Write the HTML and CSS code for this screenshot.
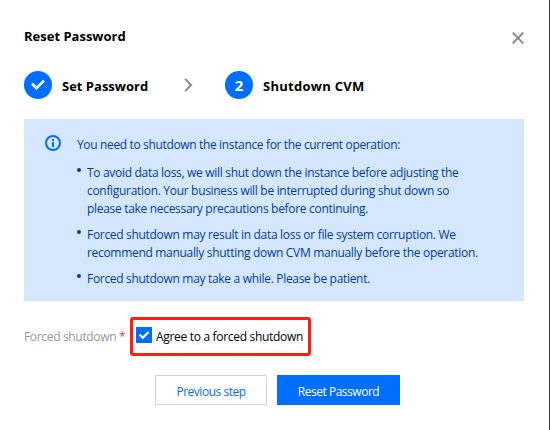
FILE: index.html
```html
<!DOCTYPE html>
<html lang="en">
<head>
    <meta charset="UTF-8">
    <meta name="viewport" content="width=device-width, initial-scale=1.0">
    <title>Reset Password</title>
    <link rel="stylesheet" href="styles.css">
</head>

<body>
<div class="dialog">
    <div class="dialog-header">
        <h1 class="dialog-title">Reset Password</h1>
        <button class="btn-close" type="button" aria-label="Close">
            <svg width="12" height="12" viewBox="0 0 12 12" fill="none" stroke="#888" stroke-width="1.9">
                <path d="M0.7 0.7L11.3 11.3M11.3 0.7L0.7 11.3"/>
            </svg>
        </button>
    </div>

    <div class="steps">
        <span class="step-num">
            <svg width="14" height="12" viewBox="0 0 14 12" fill="none" stroke="#fff" stroke-width="2.6">
                <path d="M1 4.8L5.4 9.1L13 1.6"/>
            </svg>
        </span>
        <span class="step-name step-first">Set Password</span>
        <svg class="step-arrow" width="9" height="14" viewBox="0 0 9 14" fill="none" stroke="#888" stroke-width="1.9">
            <path d="M1 0.9L7.2 7L1 13.1"/>
        </svg>
        <span class="step-num">2</span>
        <span class="step-name step-second">Shutdown CVM</span>
    </div>

    <div class="alert">
        <svg class="alert-icon" width="16" height="16" viewBox="0 0 16 16">
            <circle cx="8" cy="8" r="7" fill="none" stroke="#006eff" stroke-width="2"/>
            <path d="M7 4h2v2H7zM7 7h2v5H7z" fill="#006eff"/>
        </svg>
        <div class="alert-content">
            <p class="alert-intro">You need to shutdown the instance for the current operation:</p>
            <ul class="alert-list">
                <li>To avoid data loss, we will shut down the instance before adjusting the<br>configuration. Your business will be interrupted during shut down so<br>please take necessary precautions before continuing.</li>
                <li>Forced shutdown may result in data loss or file system corruption. We<br>recommend manually shutting down CVM manually before the operation.</li>
                <li>Forced shutdown may take a while. Please be patient.</li>
            </ul>
        </div>
    </div>

    <div class="form-row">
        <span class="form-label">Forced shutdown <span class="required">*</span></span>
        <label class="agree">
            <span class="checkbox">
                <svg width="16" height="16" viewBox="0 0 16 16" fill="none" stroke="#fff" stroke-width="2.1">
                    <path d="M3.5 7.6L6.8 10.8L12.6 5"/>
                </svg>
            </span>
            <span class="agree-text">Agree to a forced shutdown</span>
        </label>
    </div>

    <div class="button-group">
        <button class="btn btn-previous" type="button">Previous step</button>
        <button class="btn btn-reset" type="button">Reset Password</button>
    </div>
</div>
</body>
</html>
```
FILE: styles.css
```css
* {
    margin: 0;
    padding: 0;
    box-sizing: border-box;
}

body {
    font-family: 'Open Sans', 'Noto Sans', sans-serif;
    font-size: 12px;
    line-height: 18px;
    color: #000;
    background-color: #fff;
    white-space: nowrap;
}

.dialog {
    width: 550px;
    height: 430px;
    padding: 27px 25px 0 24px;
    border-right: 1px solid #333;
    overflow: hidden;
}

.dialog-header {
    display: flex;
    justify-content: space-between;
    height: 44px;
}

.dialog-title {
    font-size: 13px;
    line-height: 18px;
    font-weight: 700;
}

.btn-close {
    width: 12px;
    height: 12px;
    margin-top: 5px;
    border: none;
    background: none;
    cursor: pointer;
}

.btn-close svg {
    display: block;
}

.steps {
    display: flex;
    align-items: center;
    height: 28px;
}

.step-num {
    display: flex;
    justify-content: center;
    align-items: center;
    width: 28px;
    height: 28px;
    border-radius: 50%;
    background-color: #006eff;
    color: #fff;
    font-size: 15px;
    font-weight: 700;
}

.step-name {
    margin: 2px 0 0 10px;
    font-size: 13px;
    font-weight: 700;
}

.step-first {
    width: 122px;
}

.step-second {
    letter-spacing: 0.28px;
}

.step-arrow {
    margin-right: 32px;
}

.alert {
    display: flex;
    height: 182px;
    margin-top: 20px;
    padding: 16px 21px 0;
    background-color: #d5e7ff;
    color: #003b9c;
}

.alert-icon {
    flex: none;
    margin-right: 16px;
}

.alert-content {
    padding-top: 1px;
    letter-spacing: -0.31px;
}

.alert-intro {
    letter-spacing: -0.35px;
}

.alert-list {
    margin-top: 10px;
    list-style: none;
}

.alert-list li {
    position: relative;
    padding-left: 10px;
    margin-bottom: 8px;
}

.alert-list li::before {
    content: "";
    position: absolute;
    top: 4px;
    left: 0;
    width: 4px;
    height: 4px;
    border-radius: 50%;
    background-color: #003b9c;
}

.form-row {
    display: flex;
    align-items: flex-start;
    margin-top: 16px;
}

.form-label {
    width: 106px;
    margin-top: 11px;
    color: #999;
    letter-spacing: -0.33px;
}

.required {
    color: #e54545;
}

.agree {
    display: flex;
    width: 181px;
    height: 39px;
    padding: 7px 0 0 3px;
    border: 3px solid #ff1f12;
    border-radius: 3px;
}

.agree-text {
    margin-top: 1px;
    letter-spacing: -0.31px;
}

.checkbox {
    width: 16px;
    height: 16px;
    margin-right: 4px;
    background-color: #006eff;
}

.checkbox svg {
    display: block;
}

.button-group {
    display: flex;
    gap: 10px;
    margin: 19px 0 0 131px;
}

.btn {
    height: 30px;
    padding-top: 4px;
    font-family: inherit;
    font-size: 12px;
    line-height: 18px;
    letter-spacing: -0.48px;
    cursor: pointer;
}

.btn-previous {
    width: 112px;
    border: 1px solid #cfd5de;
    background-color: #fff;
    color: #006eff;
}

.btn-reset {
    width: 123px;
    border: none;
    background-color: #006eff;
    color: #fff;
}
```
